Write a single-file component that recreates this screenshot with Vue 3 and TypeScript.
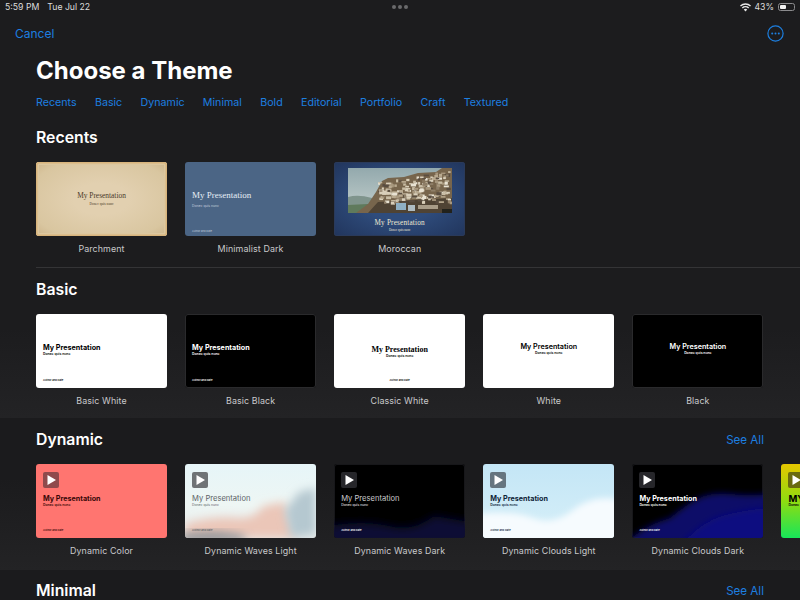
<script setup lang="ts">
interface Theme {
  name: string
  kind: string
  author?: boolean
}
interface Block {
  x: number
  y: number
  w: number
  h: number
  c: string
}
const tabs: string[] = ['Recents', 'Basic', 'Dynamic', 'Minimal', 'Bold', 'Editorial', 'Portfolio', 'Craft', 'Textured']
const recents: Theme[] = [
  { name: 'Parchment', kind: 'parchment' },
  { name: 'Minimalist Dark', kind: 'minimalist', author: true },
  { name: 'Moroccan', kind: 'moroccan' },
]
const basic: Theme[] = [
  { name: 'Basic White', kind: 'basic-white', author: true },
  { name: 'Basic Black', kind: 'basic-black', author: true },
  { name: 'Classic White', kind: 'classic-white', author: true },
  { name: 'White', kind: 'white' },
  { name: 'Black', kind: 'black' },
]
const dynamic: Theme[] = [
  { name: 'Dynamic Color', kind: 'dyn-color', author: true },
  { name: 'Dynamic Waves Light', kind: 'dyn-waves-light', author: true },
  { name: 'Dynamic Waves Dark', kind: 'dyn-waves-dark', author: true },
  { name: 'Dynamic Clouds Light', kind: 'dyn-clouds-light', author: true },
  { name: 'Dynamic Clouds Dark', kind: 'dyn-clouds-dark', author: true },
  { name: '', kind: 'dyn-bright' },
]

/* the hillside town in the Moroccan thumbnail: small houses scattered over the slope */
const palette: string[] = ['#d9cfba', '#b8a98f', '#e8e2d2', '#8f7f68', '#c9bda5', '#a8987e', '#5a4e40', '#d9cfba']
const blocks: Block[] = []
let seed = 11
const rnd = (): number => {
  seed = (seed * 16807) % 2147483647
  return seed / 2147483647
}
for (let i = 0; i < 190; i++) {
  const x = 30 + rnd() * 72
  const top = 14 - (x - 30) * 0.17
  const y = top + rnd() * (34 - top)
  blocks.push({
    x,
    y,
    w: 2 + rnd() * 3.5,
    h: 1.2 + rnd() * 2,
    c: palette[Math.floor(rnd() * palette.length)],
  })
}
</script>

<template>
  <div class="page">
    <div class="status">
      <div class="status-left"><span>5:59 PM</span><span>Tue Jul 22</span></div>
      <div class="dots"><i></i><i></i><i></i></div>
      <div class="status-right">
        <svg width="11" height="9" viewBox="0 0 22 17" fill="#e8e8e8">
          <path d="M11 16.5 7.5 12.6a5 5 0 0 1 7 0Z" />
          <path d="M5.6 10.6 3.6 8.4a11 11 0 0 1 14.8 0l-2 2.2a8 8 0 0 0-10.8 0Z" />
          <path d="M1.9 6.5 0 4.4a16 16 0 0 1 22 0l-1.9 2.1a13.4 13.4 0 0 0-18.2 0Z" />
        </svg>
        <span>43%</span>
        <span class="battery"><span class="battery-fill"></span></span>
      </div>
    </div>

    <div class="nav">
      <span class="link cancel">Cancel</span>
      <svg class="more" width="17" height="17" viewBox="0 0 17 17" fill="none">
        <circle cx="8.5" cy="8.5" r="7.6" stroke="#1d7fe0" stroke-width="1.2" />
        <circle cx="5.2" cy="8.5" r="1" fill="#1d7fe0" />
        <circle cx="8.5" cy="8.5" r="1" fill="#1d7fe0" />
        <circle cx="11.8" cy="8.5" r="1" fill="#1d7fe0" />
      </svg>
    </div>

    <h1 class="title">Choose a Theme</h1>

    <div class="tabs">
      <span v-for="t in tabs" :key="t" class="link">{{ t }}</span>
    </div>

    <section class="recents">
      <h2>Recents</h2>
      <div class="row">
        <figure v-for="t in recents" :key="t.name" class="item">
          <div class="thumb" :class="t.kind">
            <svg v-if="t.kind === 'moroccan'" class="photo" viewBox="0 0 104 45" preserveAspectRatio="none">
              <defs>
                <linearGradient id="sky" x1="0" y1="0" x2="0" y2="1">
                  <stop offset="0" stop-color="#93a9ad" />
                  <stop offset="1" stop-color="#c3cfcc" />
                </linearGradient>
                <filter id="soft" x="-5%" y="-5%" width="110%" height="110%"><feGaussianBlur stdDeviation="0.4" /></filter>
              </defs>
              <rect width="104" height="45" fill="url(#sky)" />
              <path d="M0 29 Q10 26 24 30 L24 45 L0 45Z" fill="#7f948c" />
              <path d="M0 37 L20 36 L20 45 L0 45Z" fill="#5f7a5c" />
              <path d="M8 45 L20 36 L28 24 L34 13 L40 10 L56 9 L70 5 L88 4 L94 0 L104 0 L104 45Z" fill="#77654c" />
              <path d="M20 45 L30 34 L50 33 L104 30 L104 45Z" fill="#4f4334" />
              <g filter="url(#soft)">
                <rect v-for="(b, i) in blocks" :key="i" :x="b.x" :y="b.y" :width="b.w" :height="b.h" :fill="b.c" />
                <rect x="48" y="35" width="10" height="7" fill="#8fb0c4" />
                <rect x="60" y="37" width="7" height="6" fill="#aebcc2" />
                <rect x="70" y="37" width="20" height="4" fill="#a89c88" />
                <rect x="94" y="41" width="10" height="4" fill="#23211f" />
              </g>
            </svg>
            <div class="t-title">My Presentation</div>
            <div class="t-sub">Donec quis nunc</div>
            <div v-if="t.author" class="t-author">Author and Date</div>
          </div>
          <figcaption>{{ t.name }}</figcaption>
        </figure>
      </div>
    </section>

    <div class="rule"></div>

    <section class="basic">
      <h2>Basic</h2>
      <div class="row">
        <figure v-for="t in basic" :key="t.name" class="item">
          <div class="thumb" :class="t.kind">
            <div class="t-title">My Presentation</div>
            <div class="t-sub">Donec quis nunc</div>
            <div v-if="t.author" class="t-author">Author and Date</div>
          </div>
          <figcaption>{{ t.name }}</figcaption>
        </figure>
      </div>
    </section>

    <section class="band">
      <div class="band-head">
        <h2>Dynamic</h2>
        <span class="link see">See All</span>
      </div>
      <div class="row">
        <figure v-for="t in dynamic" :key="t.kind" class="item">
          <div class="thumb" :class="t.kind">
            <svg v-if="t.kind === 'dyn-waves-light'" class="art" viewBox="0 0 131 74" preserveAspectRatio="none">
              <defs>
                <filter id="blur1" x="-30%" y="-30%" width="160%" height="160%"><feGaussianBlur stdDeviation="5" /></filter>
              </defs>
              <path d="M0 60 Q30 52 50 54 T78 42 L100 38 L112 74 L0 74Z" fill="#ebc6b8" filter="url(#blur1)" />
              <path d="M100 46 L114 28 L131 24 L131 70 L106 74Z" fill="#b5c8d0" filter="url(#blur1)" />
              <path d="M-4 70 Q30 64 60 72 L60 78 L-4 78Z" fill="#8d9094" filter="url(#blur1)" />
            </svg>
            <svg v-else-if="t.kind === 'dyn-waves-dark'" class="art" viewBox="0 0 131 74" preserveAspectRatio="none">
              <defs>
                <filter id="blur2" x="-30%" y="-30%" width="160%" height="160%"><feGaussianBlur stdDeviation="4" /></filter>
              </defs>
              <path d="M-6 62 Q30 56 55 62 T100 52 L137 58 L137 80 L-6 80Z" fill="#081034" filter="url(#blur2)" />
            </svg>
            <svg v-else-if="t.kind === 'dyn-clouds-light'" class="art" viewBox="0 0 131 74" preserveAspectRatio="none">
              <defs>
                <filter id="blur3" x="-30%" y="-30%" width="160%" height="160%"><feGaussianBlur stdDeviation="3" /></filter>
              </defs>
              <path d="M-6 50 Q30 46 50 54 T90 46 T137 36 L137 80 L-6 80Z" fill="#f6fbfe" filter="url(#blur3)" />
            </svg>
            <svg v-else-if="t.kind === 'dyn-clouds-dark'" class="art" viewBox="0 0 131 74" preserveAspectRatio="none">
              <defs>
                <filter id="blur4" x="-30%" y="-30%" width="160%" height="160%"><feGaussianBlur stdDeviation="3" /></filter>
              </defs>
              <path d="M-6 80 Q10 62 38 54 Q60 36 72 32 T100 30 T137 30 L137 80Z" fill="#0a0a68" filter="url(#blur4)" />
              <path d="M50 80 Q70 58 90 52 T137 44 L137 80Z" fill="#0b0b80" filter="url(#blur4)" />
            </svg>
            <span class="play">
              <svg width="9" height="10" viewBox="0 0 9 10"><path d="M0.5 0 L9 5 L0.5 10Z" fill="#fff" /></svg>
            </span>
            <div class="t-title">{{ t.kind === 'dyn-bright' ? 'MY' : 'My Presentation' }}</div>
            <div class="t-sub">Donec quis nunc</div>
            <div v-if="t.author" class="t-author">Author and Date</div>
          </div>
          <figcaption>{{ t.name }}</figcaption>
        </figure>
      </div>
    </section>

    <section class="last">
      <h2>Minimal</h2>
      <span class="link see">See All</span>
    </section>
  </div>
</template>

<style>
html, body { margin: 0; background: #1c1c1e; }
</style>

<style scoped>
.page {
  width: 800px;
  height: 600px;
  overflow: hidden;
  background: #1c1c1e;
  color: #fff;
  font-family: Inter, "Liberation Sans", sans-serif;
}
.status {
  height: 14px;
  padding: 0 5px 0 5px;
  display: flex;
  align-items: center;
  justify-content: space-between;
  font-size: 8.7px;
  color: #dcdcdc;
  position: relative;
}
.status-left { display: flex; gap: 8px; }
.status-right { display: flex; align-items: center; gap: 3px; }
.dots {
  position: absolute;
  left: 392px;
  top: 5px;
  display: flex;
  gap: 2px;
}
.dots i { width: 4px; height: 4px; border-radius: 50%; background: #6a6a6c; }
.battery {
  width: 17px;
  height: 8px;
  box-sizing: border-box;
  border: 1px solid #8b8b8d;
  border-radius: 2.5px;
  padding: 1px;
  display: flex;
  margin-left: 1px;
}
.battery-fill { width: 6px; background: #f2f2f2; border-radius: 1px; }
.link { color: #1d7fe0; font-size: 10.7px; }
.nav {
  height: 29px;
  margin-top: 5px;
  padding: 0 16px 0 16px;
  display: flex;
  align-items: center;
  justify-content: space-between;
}
.cancel { font-size: 12px; margin-left: -1px; }
.title {
  margin: 6px 0 0 36px;
  font-size: 24px;
  line-height: 34px;
  font-weight: 700;
}
.tabs {
  margin: 6px 0 0 36px;
  display: flex;
  gap: 18.25px;
  height: 16px;
  align-items: center;
}
h2 {
  margin: 0;
  font-size: 15.8px;
  line-height: 20px;
  font-weight: 600;
}
.recents { padding: 18px 36px 0; }
.row { display: flex; gap: 18.1px; margin-top: 14px; }
.item { margin: 0; width: 131px; flex: none; }
figcaption {
  margin-top: 6px;
  height: 13px;
  line-height: 13px;
  font-size: 8.9px;
  letter-spacing: 0.1px;
  text-align: center;
  color: #c9c9cb;
  white-space: nowrap;
}
.rule {
  height: 1px;
  margin: 12px 0 0 36px;
  background: #343436;
}
.basic {
  padding: 12px 36px 0;
  height: 138px;
  background: linear-gradient(180deg, #1c1c1e 40%, #232325 100%);
}
.band {
  height: 152px;
  box-sizing: border-box;
  padding: 12px 36px 0;
  background: linear-gradient(180deg, #1b1b1d 40%, #232325 100%);
}
.band-head { display: flex; justify-content: space-between; align-items: center; }
.see { font-size: 11.6px; }
.last {
  height: 40px;
  padding: 11px 36px 0;
  background: #1b1b1d;
  display: flex;
  justify-content: space-between;
  align-items: flex-start;
}
.last .see { margin-top: 3px; }

/* thumbnails */
.thumb {
  position: relative;
  width: 131px;
  height: 74px;
  box-sizing: border-box;
  border-radius: 3px;
  overflow: hidden;
  padding: 29px 7px 0;
  display: flex;
  flex-direction: column;
  color: #000;
}
.t-title { font-size: 7.2px; line-height: 9px; font-weight: 700; white-space: nowrap; position: relative; }
.t-sub { font-size: 3.4px; line-height: 5px; font-weight: 600; white-space: nowrap; position: relative; }
.t-author { margin-top: auto; margin-bottom: 6px; font-size: 2.6px; line-height: 3px; font-weight: 600; white-space: nowrap; position: relative; }
.art { position: absolute; inset: 0; width: 100%; height: 100%; }
.play {
  position: relative;
  width: 16px;
  height: 16px;
  border-radius: 2px;
  display: flex;
  align-items: center;
  justify-content: center;
  margin: -21px 0 5.5px;
  background: rgba(60, 60, 60, 0.6);
}

.parchment {
  background: radial-gradient(ellipse at center, #e2d0b0 30%, #d9c6a0 80%, #cdb58a 100%);
  box-shadow: inset 0 0 0 1.5px #d8b47c, inset 0 0 0 3px #dcc79f;
  align-items: center;
  padding-top: 28.5px;
  color: #4a3b2a;
}
.parchment .t-title { font-family: "Liberation Serif", serif; font-weight: 400; font-size: 7.4px; }
.parchment .t-sub { font-family: "Liberation Serif", serif; font-weight: 400; font-size: 3.6px; margin-top: 2px; }

.minimalist { background: #4b6585; color: #e6edf5; padding-top: 28px; }
.minimalist .t-title { font-family: "Liberation Serif", serif; font-weight: 400; font-size: 9px; line-height: 11px; }
.minimalist .t-sub { font-weight: 400; margin-top: 3px; color: #c3cfdd; }
.minimalist .t-author { margin-bottom: 3px; font-weight: 400; color: #c3cfdd; }

.moroccan {
  background: radial-gradient(ellipse at center, #2f4c7c 40%, #21355c 100%);
  box-shadow: inset 0 0 0 1px #2a3a5a;
  align-items: center;
  color: #f1ead2;
  padding-top: 57px;
}
.moroccan .photo { position: absolute; left: 14px; top: 6px; width: 104px; height: 45px; }
.moroccan .t-title { font-family: "Liberation Serif", serif; font-size: 7.2px; font-weight: 400; letter-spacing: 0.2px; }
.moroccan .t-sub { font-family: "Liberation Serif", serif; font-size: 3.2px; line-height: 4px; font-weight: 400; }

.basic-white, .white, .classic-white { background: #fff; }
.basic-black, .black { background: #000; color: #fff; box-shadow: inset 0 0 0 1px #2a2a2c; }
.classic-white { align-items: center; padding-top: 31px; }
.classic-white .t-title { font-family: "Liberation Serif", serif; font-size: 8px; }
.white, .black { align-items: center; padding-top: 28px; }
.white .t-title, .black .t-title { font-weight: 600; }

.dyn-color { background: #ff7570; color: #3a0808; }
.dyn-color .play { background: #8f4a4c; }
.dyn-waves-light { background: linear-gradient(180deg, #e6f5f8, #eef6f4 55%, #e6eaea); color: #5d6468; }
.dyn-waves-light .play { background: #6f7376; }
.dyn-waves-light .t-title, .dyn-waves-dark .t-title { font-weight: 400; font-size: 7.6px; }
.dyn-waves-light .t-sub, .dyn-waves-dark .t-sub { font-weight: 400; }
.dyn-waves-dark { background: #000; color: #c9c9cb; box-shadow: inset 0 0 0 1px #17171a; }
.dyn-waves-dark .t-sub, .dyn-waves-dark .t-author { color: #fff; }
.dyn-waves-dark .play { background: #26262a; }
.dyn-clouds-light { background: linear-gradient(180deg, #c4e6f6, #d6eff8); color: #0e2438; }
.dyn-clouds-light .play { background: #66757f; }
.dyn-clouds-dark { background: #000; color: #fff; box-shadow: inset 0 0 0 1px #17171a; }
.dyn-clouds-dark .play { background: #26262a; }
.dyn-bright { background: linear-gradient(180deg, #e6c600, #8fdc10 50%, #17e65a); color: #000; }
.dyn-bright .play { background: #6a6a10; }
.dyn-bright .t-title { font-size: 9.5px; }
</style>
